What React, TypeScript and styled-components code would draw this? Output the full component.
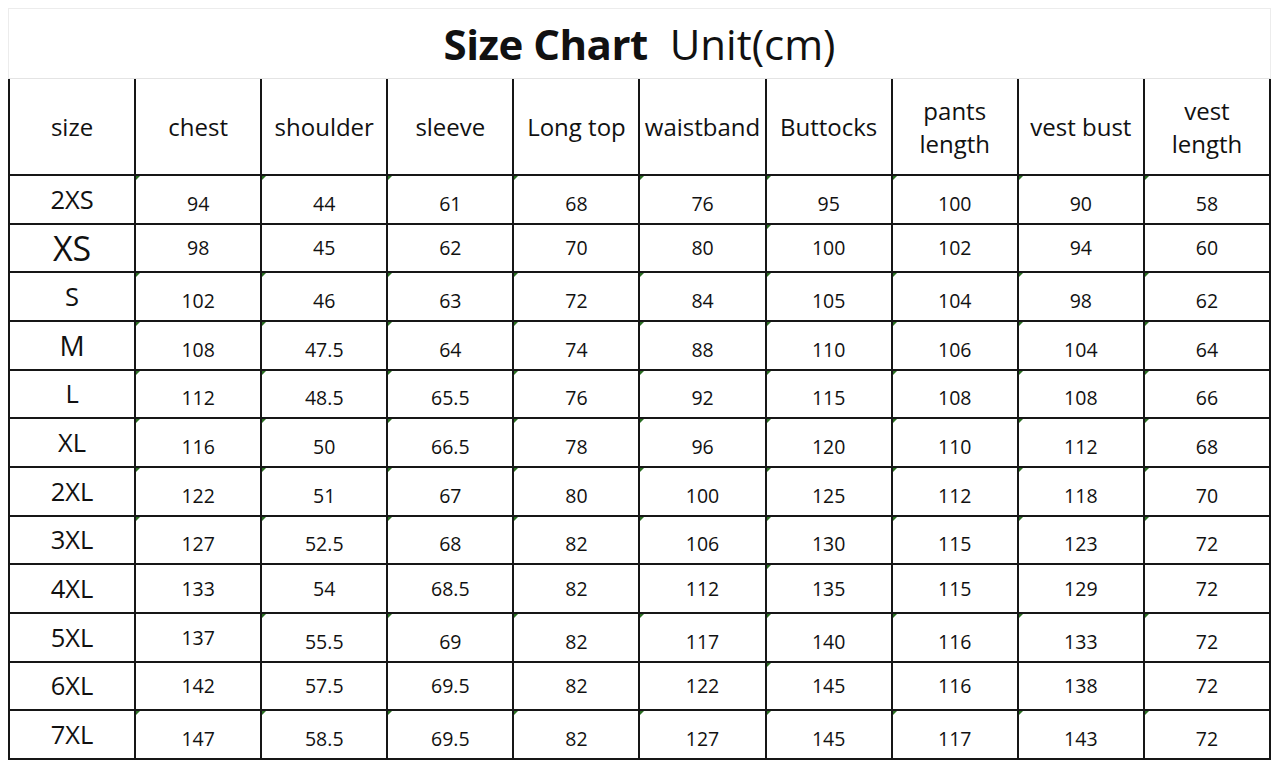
import React from "react";
import styled, {createGlobalStyle} from "styled-components";

// ' prefix = value stored as text (green corner mark, sits a bit lower)
// ~ prefix = stored as text but still centred
const headers = ["size", "chest", "shoulder", "sleeve", "Long top", "waistband", "Buttocks", "pants\nlength", "vest bust", "vest\nlength"];

const rows: { size: string, big?: number, values: string[] }[] = [
    {size: "2XS", values: ["'94", "'44", "'61", "'68", "'76", "'95", "'100", "'90", "'58"]},
    {size: "XS", big: 34, values: ["98", "45", "62", "70", "80", "~100", "102", "94", "60"]},
    {size: "S", values: ["'102", "'46", "'63", "'72", "'84", "'105", "'104", "'98", "'62"]},
    {size: "M", big: 28, values: ["'108", "'47.5", "'64", "'74", "'88", "'110", "'106", "'104", "'64"]},
    {size: "L", values: ["'112", "'48.5", "'65.5", "'76", "'92", "'115", "'108", "'108", "'66"]},
    {size: "XL", values: ["'116", "'50", "'66.5", "'78", "'96", "'120", "'110", "'112", "'68"]},
    {size: "2XL", values: ["'122", "'51", "'67", "'80", "'100", "'125", "'112", "'118", "'70"]},
    {size: "3XL", values: ["'127", "'52.5", "'68", "'82", "'106", "'130", "'115", "'123", "'72"]},
    {size: "4XL", values: ["133", "54", "68.5", "82", "112", "~135", "115", "129", "72"]},
    {size: "5XL", values: ["137", "'55.5", "'69", "'82", "'117", "'140", "'116", "'133", "'72"]},
    {size: "6XL", values: ["142", "57.5", "69.5", "82", "122", "~145", "116", "138", "72"]},
    {size: "7XL", values: ["'147", "'58.5", "'69.5", "'82", "'127", "'145", "'117", "'143", "'72"]},
];

const App: React.FC = () => {
    return (
        <Page>
            <GlobalStyle/>
            <TitleBox>
                <TitleStrong>Size Chart</TitleStrong>
                <TitleUnit>Unit(cm)</TitleUnit>
            </TitleBox>
            <Grid>
                {headers.map(h => (
                    <HeadCell key={h}>{h}</HeadCell>
                ))}
                {rows.map(r => (
                    <React.Fragment key={r.size}>
                        <SizeCell $size={r.big ?? 25.5}>{r.size}</SizeCell>
                        {r.values.map((v, i) => {
                            const mark = v[0] === "'" || v[0] === "~"
                            const low = v[0] === "'"
                            return (
                                <ValueCell key={i} $mark={mark} $low={low}>
                                    {mark ? v.slice(1) : v}
                                </ValueCell>
                            )
                        })}
                    </React.Fragment>
                ))}
            </Grid>
        </Page>
    )
}

export default App

const GlobalStyle = createGlobalStyle`
  body {
    margin: 8px;
    background: #fff;
    font-family: "Open Sans", "Noto Sans", "DejaVu Sans", sans-serif;
    color: #111;
  }
`
const Page = styled.div`
  width: 1263px;
`
const TitleBox = styled.div`
  height: 71px;
  box-sizing: border-box;
  border: 1px solid #ececec;
  border-bottom-color: #e4e4e4;
  display: flex;
  align-items: center;
  justify-content: center;
  font-size: 42px;
  line-height: 1;
`
const TitleStrong = styled.span`
  font-weight: 700;
  letter-spacing: -0.5px;
`
const TitleUnit = styled.span`
  font-weight: 400;
  margin-left: 22px;
`
const Grid = styled.div`
  display: grid;
  grid-template-columns: repeat(10, 1fr);
  grid-template-rows: 95px repeat(12, 1fr);
  height: 681px;
  box-sizing: border-box;
  gap: 2px;
  padding: 0 2px 2px 2px;
  background: #161616;
`
const Cell = styled.div`
  position: relative;
  background: #fff;
  display: flex;
  align-items: center;
  justify-content: center;
  text-align: center;
  color: #111;
`
const HeadCell = styled(Cell)`
  font-size: 24px;
  line-height: 33px;
  white-space: pre-line;
`
const SizeCell = styled(Cell)<{ $size: number }>`
  font-size: ${p => p.$size}px;
  line-height: 1;
`
const ValueCell = styled(Cell)<{ $mark: boolean, $low: boolean }>`
  font-size: 19.5px;
  line-height: 1;
  padding-top: ${p => p.$low ? 8 : 0}px;

  &::before {
    content: "";
    display: ${p => p.$mark ? "block" : "none"};
    position: absolute;
    top: 0;
    left: 0;
    border-top: 4px solid #2a6e22;
    border-right: 4px solid transparent;
  }
`
